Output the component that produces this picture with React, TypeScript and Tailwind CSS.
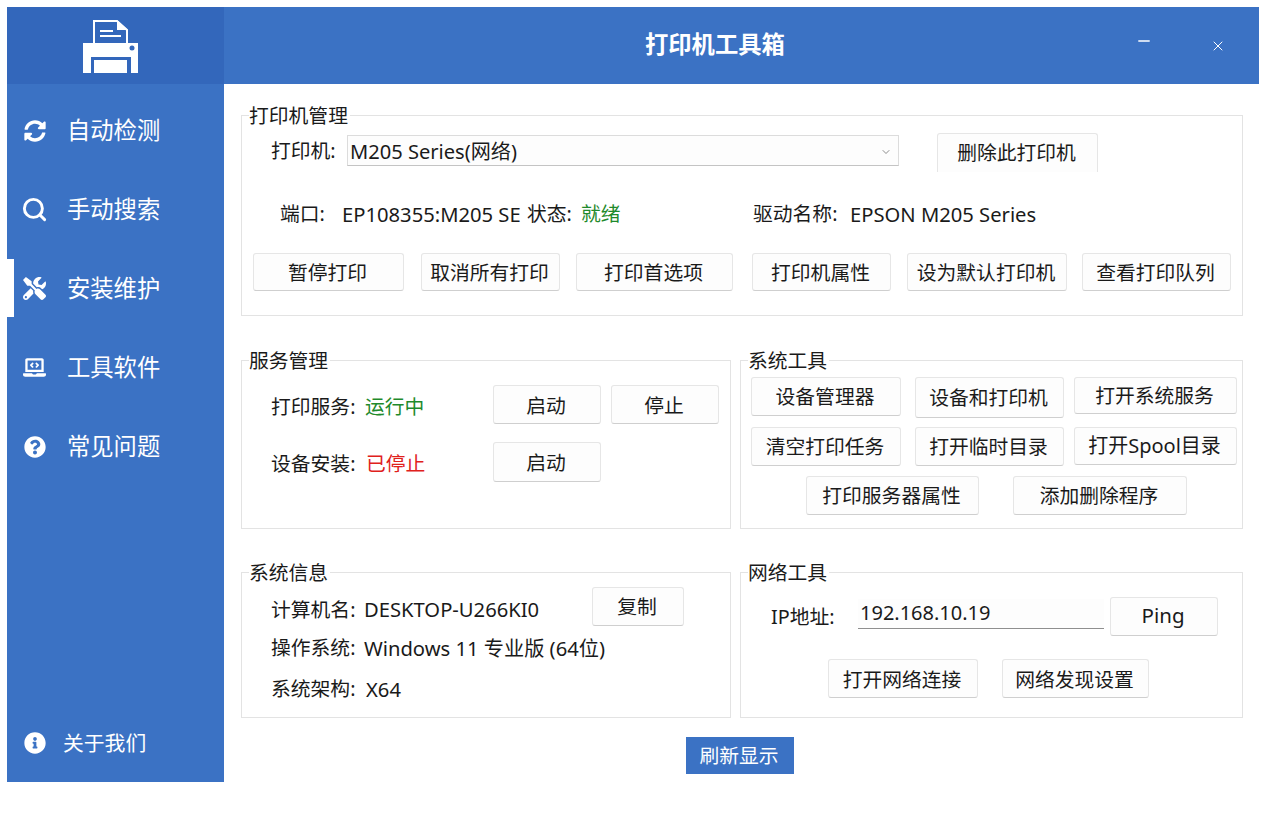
import React from 'react';
import { ChevronDown, Minus, Search, X } from 'lucide-react';
import { FaInfoCircle, FaLaptopCode, FaQuestionCircle, FaSyncAlt, FaTools } from 'react-icons/fa';

const font = 'font-["Noto_Sans","Noto_Sans_CJK_SC",sans-serif]';

const navItems = [
  { label: '自动检测', icon: FaSyncAlt, size: 22 },
  { label: '手动搜索', icon: null, size: 27 },
  { label: '安装维护', icon: FaTools, size: 23, active: true },
  { label: '工具软件', icon: FaLaptopCode, size: 23 },
  { label: '常见问题', icon: FaQuestionCircle, size: 22 },
];

const PrinterLogo = () => (
  <svg width="55" height="53" viewBox="0 0 55 53">
    <path d="M11 23V1h23l10 9v13" fill="none" stroke="#fff" strokeWidth="2" />
    <path d="M34 0l11 10H34z" fill="#fff" />
    <path d="M17 11h13M17 16h21" stroke="#fff" strokeWidth="2" />
    <path d="M0 23h55v30H0z" fill="#fff" />
    <circle cx="49" cy="28" r="2.5" fill="#3367bb" />
    <path d="M8 53V37h40v16h-4V40H11v13z" fill="#3367bb" />
  </svg>
);

const Btn = ({ children, className = '' }: { children: React.ReactNode; className?: string }) => (
  <button className={`flex shrink-0 items-center justify-center rounded-[3px] border border-[#e6e6e6] border-b-[#cfcfcf] bg-[#fdfdfd] pr-[2px] text-[19.8px] leading-none text-[#1a1a1a] ${className}`}>
    {children}
  </button>
);

const Group = ({ title, className = '', children }: { title: string; className?: string; children: React.ReactNode }) => (
  <section className={`relative border border-[#e3e3e3] ${className}`}>
    <h2 className="absolute left-[7px] top-[-13px] bg-white pr-[2px] text-[19.8px] font-normal leading-[26px] text-[#1a1a1a]">{title}</h2>
    {children}
  </section>
);

export default function App() {
  return (
    <div className={`flex h-[817px] w-[1265px] items-start overflow-hidden bg-white pl-[7px] pt-[7px] ${font}`}>
      <aside className="flex h-[775px] w-[217px] flex-col bg-[#3b72c4] text-white">
        <div className="flex h-[77px] items-start justify-center bg-[#3367bb] pr-[11px] pt-[13px]">
          <PrinterLogo />
        </div>
        <nav className="mt-[7px] flex flex-col">
          {navItems.map((item) => (
            <div key={item.label} className="relative flex h-[79px] items-center pl-[16px]">
              {item.active && <span className="absolute left-0 top-[10px] h-[58px] w-[7px] bg-white" />}
              <span className="flex w-[23px] justify-center">
                {item.icon ? <item.icon size={item.size} className="shrink-0" /> : <Search size={item.size} strokeWidth={2.6} className="shrink-0" />}
              </span>
              <span className="ml-[21px] text-[23.3px] leading-none">{item.label}</span>
            </div>
          ))}
        </nav>
        <div className="mt-auto mb-[14px] flex h-[50px] items-center pl-[17px]">
          <FaInfoCircle size={22} />
          <span className="ml-[17px] text-[20.8px] leading-none">关于我们</span>
        </div>
      </aside>

      <main className="flex w-[1035px] flex-col">
        <header className="flex h-[77px] items-center bg-[#3b72c4] text-white">
          <h1 className="ml-[421px] mt-[-2px] text-[23.3px] font-bold leading-none">打印机工具箱</h1>
          <Minus size={18} strokeWidth={1.7} className="ml-[350px] mt-[-9px]" />
          <X size={16} strokeWidth={1.5} className="ml-[57px]" />
        </header>

        <div className="flex flex-col pl-[17px] pt-[31px] text-[19.8px] leading-none text-[#1a1a1a]">
          <Group title="打印机管理" className="h-[201px] w-[1002px]">
            <div className="mt-[17px] flex h-[39px] items-start pl-[29px]">
              <span className="flex h-[35px] w-[76px] items-center">打印机:</span>
              <div className="mt-[2px] flex h-[31px] w-[552px] items-center justify-between border border-[#dcdcdc] border-b-[#c4c4c4] bg-[#fdfdfd] pl-[2px] pr-[6px] pt-[3px] text-[20.1px]">
                M205 Series(网络)
                <ChevronDown size={12} strokeWidth={1.5} className="text-[#666]" />
              </div>
              <Btn className="ml-[38px] h-[39px] w-[161px] rounded-b-none border-b-0">删除此打印机</Btn>
            </div>
            <div className="mt-[28px] flex h-[28px] items-center pl-[38px]">
              <span className="w-[62px]">端口:</span>
              <span className="w-[185px] whitespace-nowrap text-[20.2px]">EP108355:M205 SE</span>
              <span className="w-[54px]">状态:</span>
              <span className="w-[172px] text-[#1f8a2c]">就绪</span>
              <span className="w-[97px]">驱动名称:</span>
              <span className="text-[20.2px]">EPSON M205 Series</span>
            </div>
            <div className="mt-[25px] flex pl-[11px]">
              <Btn className="h-[38px] w-[151px] pt-[2px]">暂停打印</Btn>
              <Btn className="ml-[17px] h-[38px] w-[139px] pt-[2px]">取消所有打印</Btn>
              <Btn className="ml-[16px] h-[38px] w-[157px] pt-[2px]">打印首选项</Btn>
              <Btn className="ml-[19px] h-[38px] w-[139px] pt-[2px]">打印机属性</Btn>
              <Btn className="ml-[16px] h-[38px] w-[160px] pt-[2px]">设为默认打印机</Btn>
              <Btn className="ml-[15px] h-[38px] w-[149px] pt-[2px]">查看打印队列</Btn>
            </div>
          </Group>

          <div className="mt-[44px] flex gap-[9px]">
            <Group title="服务管理" className="h-[169px] w-[490px]">
              <div className="mt-[24px] flex items-center pl-[29px]">
                <span className="w-[94px] pt-[4px]">打印服务:</span>
                <span className="w-[128px] pt-[4px] text-[#1f8a2c]">运行中</span>
                <Btn className="h-[39px] w-[108px] pt-[2px]">启动</Btn>
                <Btn className="ml-[10px] h-[39px] w-[108px] pt-[2px]">停止</Btn>
              </div>
              <div className="mt-[18px] flex items-center pl-[29px]">
                <span className="w-[95px] pt-[4px]">设备安装:</span>
                <span className="w-[127px] pt-[4px] text-[#e0211c]">已停止</span>
                <Btn className="h-[40px] w-[108px] pt-[2px]">启动</Btn>
              </div>
            </Group>

            <Group title="系统工具" className="h-[169px] w-[503px]">
              <div className="mt-[16px] flex items-start pl-[10px]">
                <Btn className="h-[39px] w-[150px]">设备管理器</Btn>
                <Btn className="ml-[14px] h-[41px] w-[149px]">设备和打印机</Btn>
                <Btn className="ml-[10px] h-[37px] w-[163px]">打开系统服务</Btn>
              </div>
              <div className="mt-[9px] flex items-start pl-[10px]">
                <Btn className="h-[39px] w-[150px]">清空打印任务</Btn>
                <Btn className="ml-[14px] h-[39px] w-[149px]">打开临时目录</Btn>
                <Btn className="ml-[10px] h-[38px] w-[163px] text-[20px]">打开Spool目录</Btn>
              </div>
              <div className="mt-[10px] flex pl-[65px]">
                <Btn className="h-[39px] w-[173px]">打印服务器属性</Btn>
                <Btn className="ml-[34px] h-[39px] w-[174px]">添加删除程序</Btn>
              </div>
            </Group>
          </div>

          <div className="mt-[43px] flex gap-[9px]">
            <Group title="系统信息" className="h-[146px] w-[490px]">
              <div className="mt-[14px] flex items-center pl-[29px]">
                <span className="w-[93px] pt-[6px]">计算机名:</span>
                <span className="w-[228px] whitespace-nowrap pt-[6px] text-[20.2px]">DESKTOP-U266KI0</span>
                <Btn className="h-[39px] w-[92px]">复制</Btn>
              </div>
              <div className="mt-[7px] flex h-[30px] items-center pl-[29px]">
                <span className="w-[93px]">操作系统:</span>
                <span className="whitespace-nowrap text-[20.2px]">Windows 11 专业版 (64位)</span>
              </div>
              <div className="mt-[11px] flex h-[30px] items-center pl-[29px]">
                <span className="w-[95px]">系统架构:</span>
                <span className="text-[20.2px]">X64</span>
              </div>
            </Group>

            <Group title="网络工具" className="h-[146px] w-[503px]">
              <div className="mt-[24px] flex items-start pl-[30px]">
                <span className="mt-[10px] w-[87px] whitespace-nowrap">IP地址:</span>
                <div className="mt-[2px] flex h-[30px] w-[246px] items-center border-b border-[#8f8f8f] bg-[#fdfdfd] pb-[2px] pl-[2px] text-[20px]">192.168.10.19</div>
                <Btn className="ml-[6px] h-[39px] w-[108px] pb-[2px] text-[20.5px]">Ping</Btn>
              </div>
              <div className="mt-[23px] flex pl-[87px]">
                <Btn className="h-[39px] w-[150px] pt-[2px]">打开网络连接</Btn>
                <Btn className="ml-[24px] h-[39px] w-[147px] pt-[2px]">网络发现设置</Btn>
              </div>
            </Group>
          </div>

          <button className="ml-[445px] mt-[19px] flex h-[37px] w-[108px] items-center justify-center bg-[#3b72c4] pr-[2px] text-[19.8px] leading-none text-white">刷新显示</button>
        </div>
      </main>
    </div>
  );
}
